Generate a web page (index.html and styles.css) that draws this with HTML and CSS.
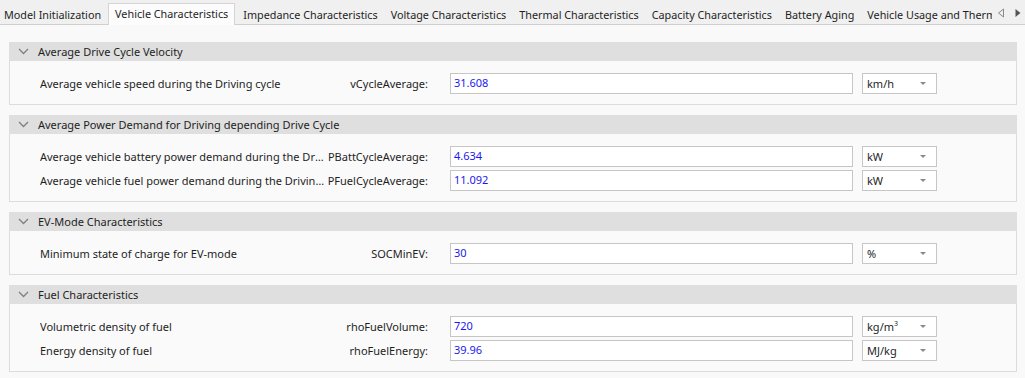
FILE: index.html
```html
<!DOCTYPE html>
<html lang="en">
<head>
  <meta charset="UTF-8" />
  <title>Vehicle Characteristics</title>
  <link rel="stylesheet" href="styles.css">
</head>
<body>
  <div class="tabbar">
    <div class="tab">Model Initialization</div>
    <div class="tab active">Vehicle Characteristics</div>
    <div class="tab">Impedance Characteristics</div>
    <div class="tab">Voltage Characteristics</div>
    <div class="tab">Thermal Characteristics</div>
    <div class="tab">Capacity Characteristics</div>
    <div class="tab">Battery Aging</div>
    <div class="tab clipped">Vehicle Usage and Thermal Management</div>
    <div class="scroll-arrows">
      <svg width="8" height="10" viewBox="0 0 8 10"><path d="M6.5 1 L1.5 5 L6.5 9 Z" fill="none" stroke="#8a8a8a" stroke-width="1"/></svg>
      <svg width="8" height="10" viewBox="0 0 8 10"><path d="M1.5 1 L6.5 5 L1.5 9 Z" fill="#555"/></svg>
    </div>
  </div>

  <div class="content">
    <div class="section">
      <div class="section-header"><svg class="chevron" width="11" height="7" viewBox="0 0 11 7"><polyline points="1,1 5.5,5.5 10,1" fill="none" stroke="#7f7f7f" stroke-width="1.3"/></svg>Average Drive Cycle Velocity</div>
      <div class="section-body">
        <div class="row">
          <div class="labels"><span class="desc">Average vehicle speed during the Driving cycle</span><span class="var">vCycleAverage:</span></div>
          <div class="value">31.608</div>
          <div class="unit">km/h<span class="caret"></span></div>
        </div>
      </div>
    </div>

    <div class="section">
      <div class="section-header"><svg class="chevron" width="11" height="7" viewBox="0 0 11 7"><polyline points="1,1 5.5,5.5 10,1" fill="none" stroke="#7f7f7f" stroke-width="1.3"/></svg>Average Power Demand for Driving depending Drive Cycle</div>
      <div class="section-body">
        <div class="row">
          <div class="labels"><span class="desc">Average vehicle battery power demand during the Driving cycle</span><span class="var">PBattCycleAverage:</span></div>
          <div class="value">4.634</div>
          <div class="unit">kW<span class="caret"></span></div>
        </div>
        <div class="row">
          <div class="labels"><span class="desc">Average vehicle fuel power demand during the Driving cycle</span><span class="var">PFuelCycleAverage:</span></div>
          <div class="value">11.092</div>
          <div class="unit">kW<span class="caret"></span></div>
        </div>
      </div>
    </div>

    <div class="section">
      <div class="section-header"><svg class="chevron" width="11" height="7" viewBox="0 0 11 7"><polyline points="1,1 5.5,5.5 10,1" fill="none" stroke="#7f7f7f" stroke-width="1.3"/></svg>EV-Mode Characteristics</div>
      <div class="section-body">
        <div class="row">
          <div class="labels"><span class="desc">Minimum state of charge for EV-mode</span><span class="var">SOCMinEV:</span></div>
          <div class="value">30</div>
          <div class="unit">%<span class="caret"></span></div>
        </div>
      </div>
    </div>

    <div class="section">
      <div class="section-header"><svg class="chevron" width="11" height="7" viewBox="0 0 11 7"><polyline points="1,1 5.5,5.5 10,1" fill="none" stroke="#7f7f7f" stroke-width="1.3"/></svg>Fuel Characteristics</div>
      <div class="section-body">
        <div class="row">
          <div class="labels"><span class="desc">Volumetric density of fuel</span><span class="var">rhoFuelVolume:</span></div>
          <div class="value">720</div>
          <div class="unit">kg/m<sup>3</sup><span class="caret"></span></div>
        </div>
        <div class="row">
          <div class="labels"><span class="desc">Energy density of fuel</span><span class="var">rhoFuelEnergy:</span></div>
          <div class="value">39.96</div>
          <div class="unit">MJ/kg<span class="caret"></span></div>
        </div>
      </div>
    </div>
  </div>
</body>
</html>
```

FILE: styles.css
```css
* {
  box-sizing: border-box;
  margin: 0;
  padding: 0;
}

body {
  font-family: "Noto Sans", "Open Sans", sans-serif;
  font-size: 11px;
  color: #1e1e1e;
  background-color: #f9f9f9;
  width: 1025px;
  height: 378px;
  overflow: hidden;
}

.tabbar {
  display: flex;
  align-items: flex-end;
  height: 25px;
  background-color: #f0f0f0;
  border-bottom: 1px solid #cfcfcf;
  white-space: nowrap;
  font-size: 10.8px;
}

.tab {
  flex: none;
  height: 21px;
  line-height: 19px;
  padding: 0 7px 0 4px;
  margin-bottom: -1px;
  border: 1px solid transparent;
  border-bottom: none;
}

.tab:first-child {
  padding-left: 3px;
  padding-right: 6px;
}

.tab.active {
  background-color: #fcfcfc;
  border-color: #d5d5d5;
  height: 22px;
  padding: 0 6px 0 6px;
  margin-right: 3px;
}

.tab.clipped {
  flex: 1;
  min-width: 0;
  overflow: hidden;
  padding-right: 0;
}

.scroll-arrows {
  flex: none;
  display: flex;
  gap: 9px;
  align-items: center;
  height: 21px;
  margin-left: 4px;
  padding: 0 3px 2px 0;
}

.content {
  padding: 17px 8px 0 9px;
  display: flex;
  flex-direction: column;
  gap: 10px;
}

.section-header {
  height: 19px;
  line-height: 19px;
  background-color: #dfdfdf;
  padding-left: 29px;
  position: relative;
}

.chevron {
  position: absolute;
  left: 9px;
  top: 6px;
}

.section-body {
  background-color: #fafafa;
  border: 1px solid #dcdcdc;
  border-top: none;
  padding: 12px 0 10px 30px;
  display: flex;
  flex-direction: column;
  gap: 3px;
}

.row {
  display: flex;
  align-items: center;
  height: 21px;
}

.labels {
  display: flex;
  width: 388px;
  gap: 3px;
}

.desc {
  flex: 1;
  min-width: 0;
  overflow: hidden;
  text-overflow: ellipsis;
  white-space: nowrap;
}

.var {
  flex: none;
  white-space: nowrap;
}

.value {
  margin-left: 22px;
  width: 403px;
  height: 21px;
  line-height: 18px;
  background-color: #fff;
  border: 1px solid #c6c6c6;
  padding-left: 3px;
  color: #1a1aee;
}

.unit {
  margin-left: 9px;
  width: 75px;
  height: 21px;
  line-height: 19px;
  background-color: #fff;
  border: 1px solid #c6c6c6;
  padding-left: 4px;
  position: relative;
}

.unit sup {
  font-size: 7px;
  vertical-align: 5px;
  line-height: 0;
}

.caret {
  position: absolute;
  right: 10px;
  top: 8px;
  border-left: 3px solid transparent;
  border-right: 3px solid transparent;
  border-top: 3px solid #8a8a8a;
}
```
